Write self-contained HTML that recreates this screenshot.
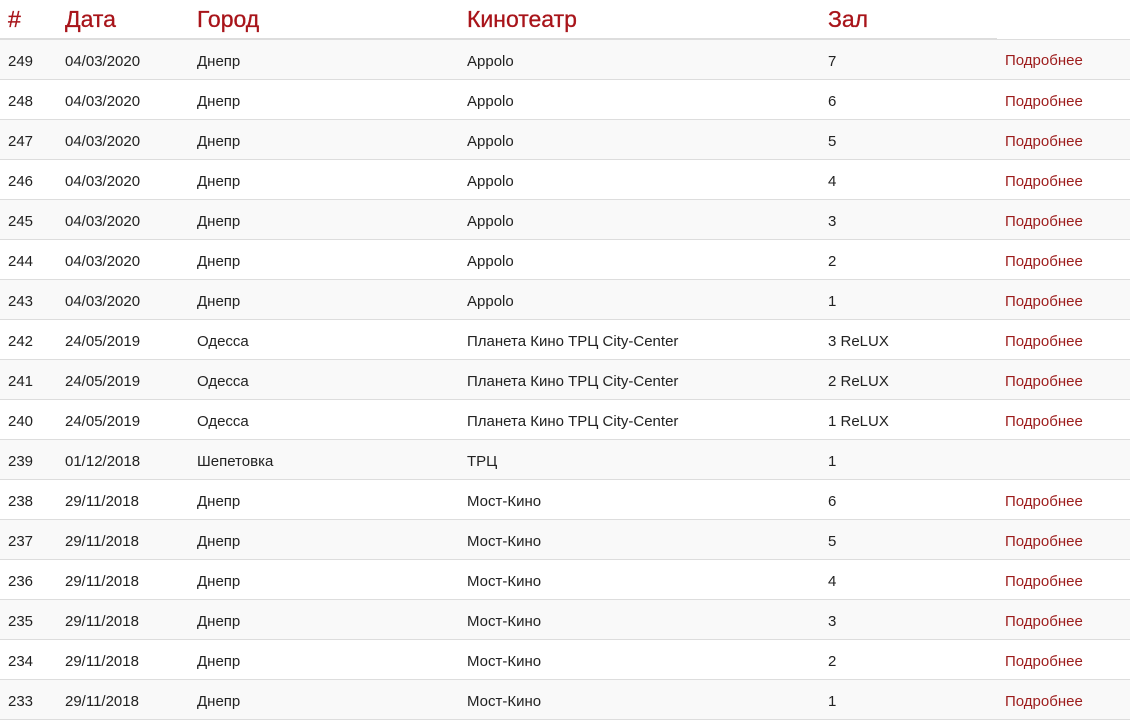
<!DOCTYPE html>
<html><head><meta charset="utf-8"><style>
body{margin:0;background:#fff;font-family:"Liberation Sans",sans-serif;}
table{border-collapse:collapse;width:1130px;table-layout:fixed;}
th{font-weight:normal;color:#a8141a;font-size:23px;text-align:left;padding:0 8px;height:38px;border-bottom:2px solid #ddd;vertical-align:middle;-webkit-text-stroke:0.3px #a8141a;}
th.e{border-bottom:1px solid #ddd;}
td{font-size:15px;color:#222;padding:3px 8px 0 8px;height:36px;border-bottom:1px solid #ddd;white-space:nowrap;}
tr:nth-child(odd) td{background:#f9f9f9;}
td a{color:#9d1c1c;text-decoration:none;}
</style></head><body>
<table>
<colgroup><col style="width:57px"><col style="width:132px"><col style="width:270px"><col style="width:361px"><col style="width:177px"><col style="width:133px"></colgroup>
<thead><tr><th>#</th><th>Дата</th><th>Город</th><th>Кинотеатр</th><th>Зал</th><th class="e"></th></tr></thead>
<tbody>
<tr><td>249</td><td>04/03/2020</td><td>Днепр</td><td>Appolo</td><td>7</td><td><a>Подробнее</a></td></tr>
<tr><td>248</td><td>04/03/2020</td><td>Днепр</td><td>Appolo</td><td>6</td><td><a>Подробнее</a></td></tr>
<tr><td>247</td><td>04/03/2020</td><td>Днепр</td><td>Appolo</td><td>5</td><td><a>Подробнее</a></td></tr>
<tr><td>246</td><td>04/03/2020</td><td>Днепр</td><td>Appolo</td><td>4</td><td><a>Подробнее</a></td></tr>
<tr><td>245</td><td>04/03/2020</td><td>Днепр</td><td>Appolo</td><td>3</td><td><a>Подробнее</a></td></tr>
<tr><td>244</td><td>04/03/2020</td><td>Днепр</td><td>Appolo</td><td>2</td><td><a>Подробнее</a></td></tr>
<tr><td>243</td><td>04/03/2020</td><td>Днепр</td><td>Appolo</td><td>1</td><td><a>Подробнее</a></td></tr>
<tr><td>242</td><td>24/05/2019</td><td>Одесса</td><td>Планета Кино ТРЦ City-Center</td><td>3 ReLUX</td><td><a>Подробнее</a></td></tr>
<tr><td>241</td><td>24/05/2019</td><td>Одесса</td><td>Планета Кино ТРЦ City-Center</td><td>2 ReLUX</td><td><a>Подробнее</a></td></tr>
<tr><td>240</td><td>24/05/2019</td><td>Одесса</td><td>Планета Кино ТРЦ City-Center</td><td>1 ReLUX</td><td><a>Подробнее</a></td></tr>
<tr><td>239</td><td>01/12/2018</td><td>Шепетовка</td><td>ТРЦ</td><td>1</td><td></td></tr>
<tr><td>238</td><td>29/11/2018</td><td>Днепр</td><td>Мост-Кино</td><td>6</td><td><a>Подробнее</a></td></tr>
<tr><td>237</td><td>29/11/2018</td><td>Днепр</td><td>Мост-Кино</td><td>5</td><td><a>Подробнее</a></td></tr>
<tr><td>236</td><td>29/11/2018</td><td>Днепр</td><td>Мост-Кино</td><td>4</td><td><a>Подробнее</a></td></tr>
<tr><td>235</td><td>29/11/2018</td><td>Днепр</td><td>Мост-Кино</td><td>3</td><td><a>Подробнее</a></td></tr>
<tr><td>234</td><td>29/11/2018</td><td>Днепр</td><td>Мост-Кино</td><td>2</td><td><a>Подробнее</a></td></tr>
<tr><td>233</td><td>29/11/2018</td><td>Днепр</td><td>Мост-Кино</td><td>1</td><td><a>Подробнее</a></td></tr>
</tbody></table>
</body></html>
